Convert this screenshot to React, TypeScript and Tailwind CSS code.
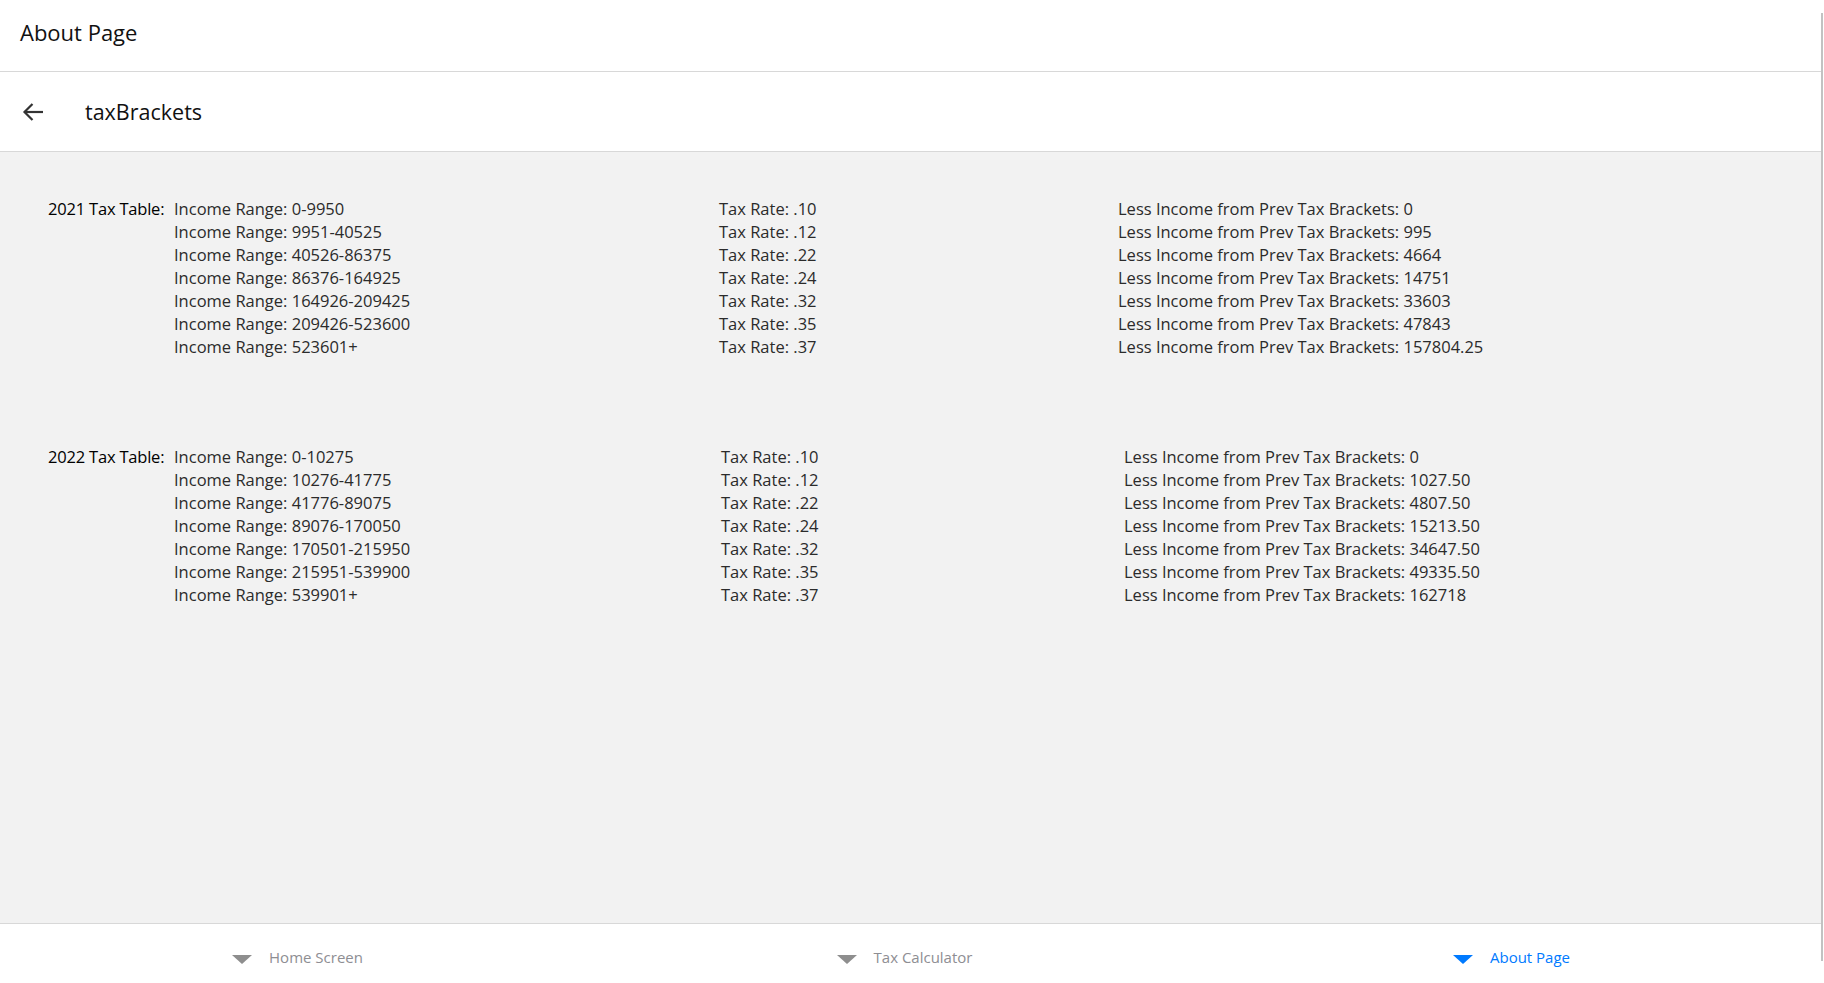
import React from 'react';

type Bracket = { range: string; rate: string; less: string };

const table2021: Bracket[] = [
    { range: '0-9950', rate: '.10', less: '0' },
    { range: '9951-40525', rate: '.12', less: '995' },
    { range: '40526-86375', rate: '.22', less: '4664' },
    { range: '86376-164925', rate: '.24', less: '14751' },
    { range: '164926-209425', rate: '.32', less: '33603' },
    { range: '209426-523600', rate: '.35', less: '47843' },
    { range: '523601+', rate: '.37', less: '157804.25' },
];

const table2022: Bracket[] = [
    { range: '0-10275', rate: '.10', less: '0' },
    { range: '10276-41775', rate: '.12', less: '1027.50' },
    { range: '41776-89075', rate: '.22', less: '4807.50' },
    { range: '89076-170050', rate: '.24', less: '15213.50' },
    { range: '170501-215950', rate: '.32', less: '34647.50' },
    { range: '215951-539900', rate: '.35', less: '49335.50' },
    { range: '539901+', rate: '.37', less: '162718' },
];

const TaxTable: React.FC<{ year: string; rows: Bracket[]; cols: string }> = ({ year, rows, cols }) => (
    <div className={`grid ${cols} leading-[23px] text-[16.5px] text-[#2b2b2b]`}>
        {rows.map((r, i) => (
            <React.Fragment key={r.range}>
                <div className="text-black whitespace-nowrap tracking-[-0.2px]">{i === 0 ? `${year} Tax Table:` : ''}</div>
                <div>Income Range: {r.range}</div>
                <div>Tax Rate: {r.rate}</div>
                <div>Less Income from Prev Tax Brackets: {r.less}</div>
            </React.Fragment>
        ))}
    </div>
);

const Triangle: React.FC<{ active?: boolean }> = ({ active }) => (
    <svg width="20" height="10" viewBox="0 0 20 10" className="mt-[6px]">
        <polygon points="0,0 20,0 10,9" fill={active ? '#007aff' : '#8e8e8e'} />
    </svg>
);

const Tab: React.FC<{ label: string; active?: boolean }> = ({ label, active }) => (
    <div className="flex-1 flex justify-center items-start pt-[23px] pr-[12px]">
        <div className="flex items-center gap-[17px]">
            <Triangle active={active} />
            <span className={`text-[15px] leading-[20px] ${active ? 'text-[#007aff]' : 'text-[#8e8e93]'}`}>{label}</span>
        </div>
    </div>
);

export default function App() {
    return (
        <div className="flex h-[983px] w-[1824px] bg-white font-['Open_Sans',sans-serif]">
            <div className="flex flex-col w-[1821px] h-full">
                <div className="h-[72px] border-b border-[#d8d8d8] flex items-center px-[20px] shrink-0">
                    <h1 className="text-[22px] text-[#111] -mt-[6px]">About Page</h1>
                </div>
                <div className="h-[80px] border-b border-[#d8d8d8] flex items-center shrink-0">
                    <div className="w-[85px] pl-[22px] flex items-center">
                        <svg width="22" height="20" viewBox="0 0 22 20" fill="none" stroke="#333" strokeWidth="2.2">
                            <path d="M21 10H2.5" />
                            <path d="M10.5 2L2.5 10l8 8" />
                        </svg>
                    </div>
                    <span className="text-[21.5px] text-[#111] mt-[1px]">taxBrackets</span>
                </div>
                <div className="flex-1 bg-[#f2f2f2] pt-[45px] pl-[48px] flex flex-col gap-[87px]">
                    <TaxTable year="2021" rows={table2021} cols="grid-cols-[126px_545px_399px_1fr]" />
                    <TaxTable year="2022" rows={table2022} cols="grid-cols-[126px_547px_403px_1fr]" />
                </div>
                <div className="h-[60px] border-t border-[#d8d8d8] flex shrink-0">
                    <Tab label="Home Screen" />
                    <Tab label="Tax Calculator" />
                    <Tab label="About Page" active />
                </div>
            </div>
            <div className="w-[3px] h-full pt-[13px] pb-[22px]">
                <div className="w-[2px] h-full bg-[#c2c2c2]" />
            </div>
        </div>
    );
}
